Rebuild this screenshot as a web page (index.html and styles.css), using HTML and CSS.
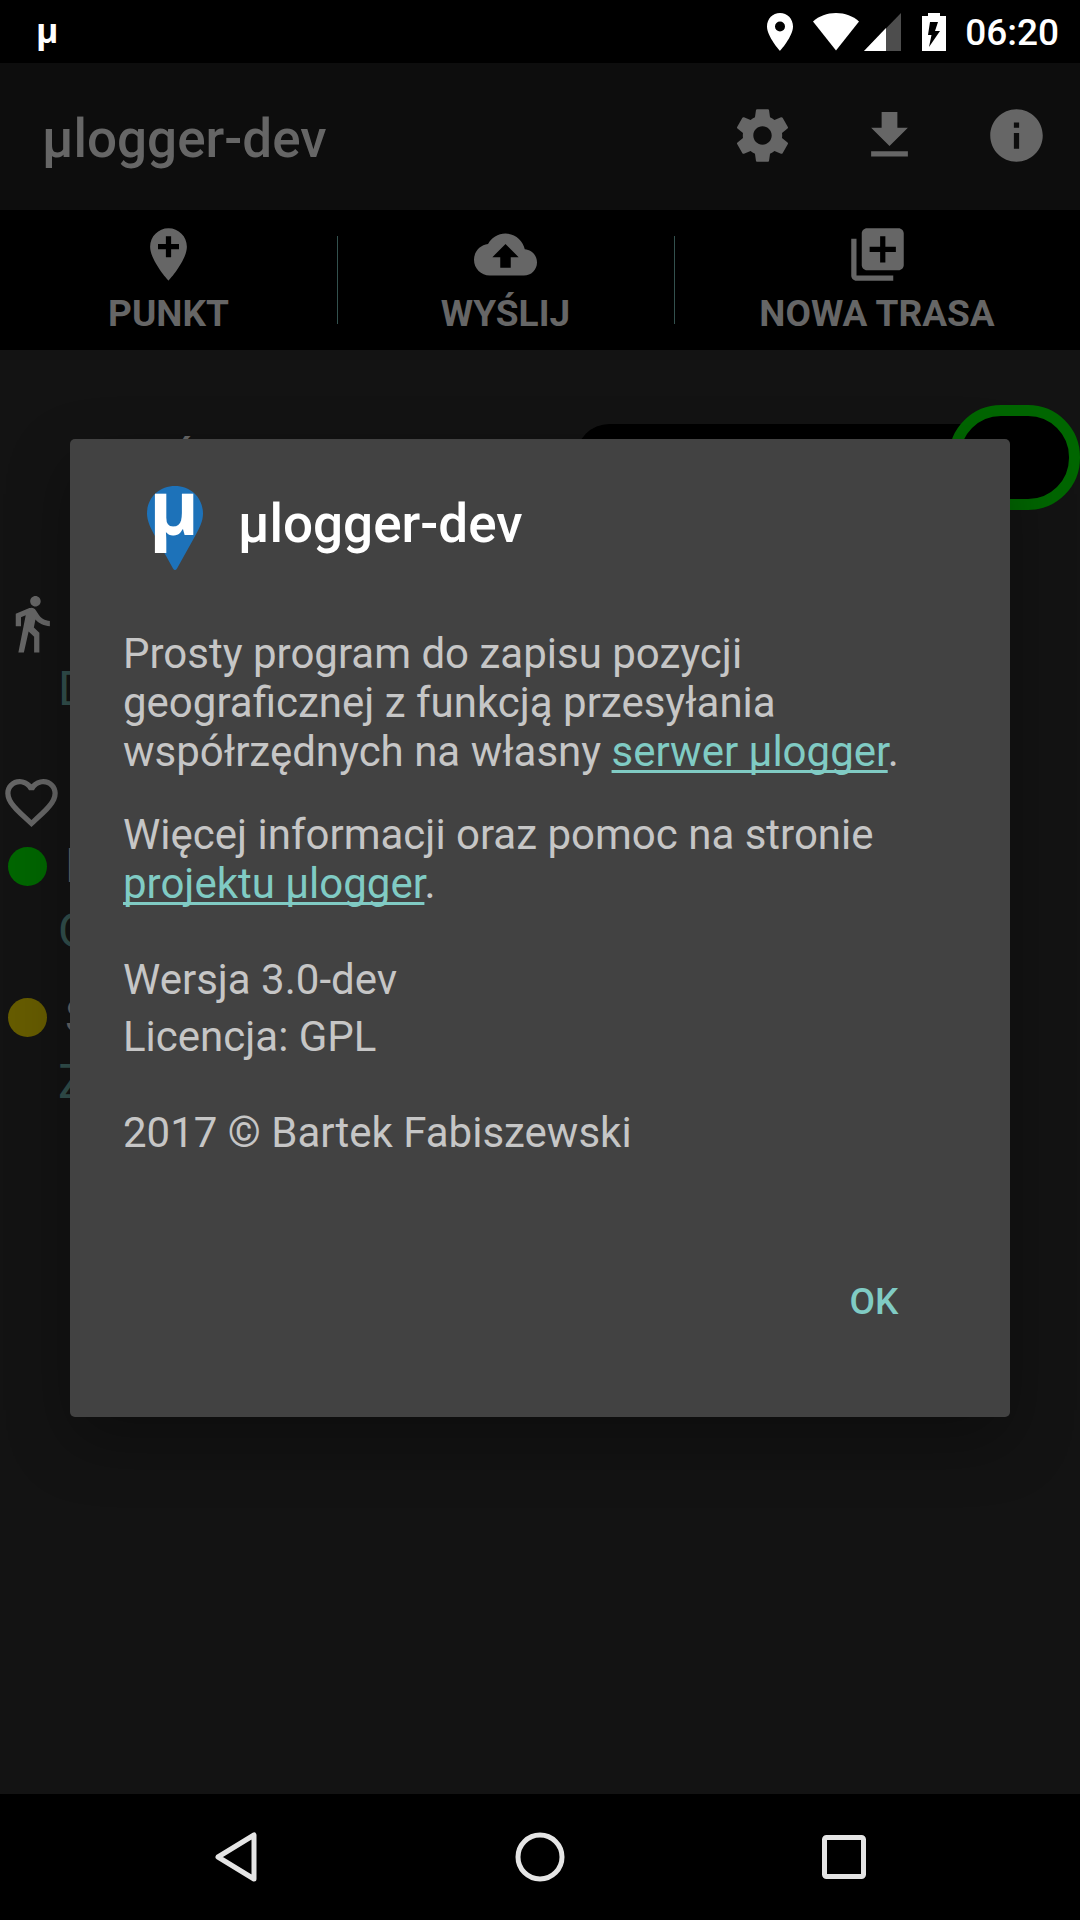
FILE: index.html
```html
<!DOCTYPE html>
<html lang="pl">
<head>
<meta charset="utf-8">
<meta name="viewport" content="width=device-width, initial-scale=1">
<title>μlogger-dev</title>
<link rel="stylesheet" href="styles.css">
</head>
<body>
<div class="screen">
  <header class="status">
    <span class="status-app">µ</span>
    <div class="status-icons">
      <svg class="s-pin" viewBox="0 0 26 38"><path fill="#fff" fill-rule="evenodd" d="M13 0C5.800 0 0 5.800 0 13.500C0 23.500 13 38 13 38S26 23.500 26 13.500C26 5.800 20.200 0 13 0ZM13 8.500a5 5 0 1 1 0 10a5 5 0 0 1 0-10Z"/></svg>
      <svg class="s-wifi" viewBox="0 0 46 38"><path fill="#fff" d="M0 8.500C6 3 14 0 23 0s17 3 23 8.500L23 37.500Z"/></svg>
      <svg class="s-cell" viewBox="0 0 37 38"><path fill="#4d4d4d" d="M37 0V38H0Z"/><path fill="#fff" d="M22 15V38H0Z"/></svg>
      <svg class="s-batt" viewBox="0 0 24 38"><path fill="#fff" d="M6 0H18V3H24V38H0V3H6Z"/><path fill="#000" d="M8 9H16L13 18H18L7 34L9.500 22H6Z"/></svg>
      <time class="clock">06:20</time>
    </div>
  </header>

  <div class="appbar">
    <h1 class="title">µlogger-dev</h1>
    <nav class="actions">
      <button class="icon-btn" aria-label="Ustawienia"><svg class="icon" viewBox="0 0 24 24"><path fill="currentColor" d="M19.430 12.980c.04-.32.07-.64.07-.98s-.03-.66-.07-.98l2.110-1.650c.19-.15.24-.42.12-.64l-2-3.460c-.12-.22-.39-.3-.61-.22l-2.490 1c-.52-.4-1.080-.73-1.690-.98l-.38-2.650C14.460 2.180 14.250 2 14 2h-4c-.25 0-.46.18-.49.42l-.38 2.650c-.61.25-1.170.59-1.690.98l-2.490-1c-.23-.09-.49 0-.61.22l-2 3.460c-.13.22-.07.49.12.64l2.110 1.650c-.04.32-.07.65-.07.98s.03.66.07.98l-2.110 1.650c-.19.15-.24.42-.12.64l2 3.460c.12.22.39.3.61.22l2.490-1c.52.4 1.080.73 1.690.98l.38 2.650c.03.24.24.42.49.42h4c.25 0 .46-.18.49-.42l.38-2.650c.61-.25 1.170-.59 1.690-.98l2.490 1c.23.09.49 0 .61-.22l2-3.460c.12-.22.07-.49-.12-.64l-2.110-1.650zM12 15.500c-1.930 0-3.500-1.570-3.500-3.500s1.570-3.500 3.500-3.500 3.500 1.570 3.500 3.500-1.570 3.500-3.500 3.500z"/></svg></button>
      <button class="icon-btn" aria-label="Eksport"><svg class="icon" viewBox="0 0 24 24"><path fill="currentColor" d="M19 9h-4V3H9v6H5l7 7 7-7zM5 18v2h14v-2H5z"/></svg></button>
      <button class="icon-btn" aria-label="Informacje"><svg class="icon" viewBox="0 0 24 24"><path fill="currentColor" d="M12 2C6.480 2 2 6.480 2 12s4.480 10 10 10 10-4.480 10-10S17.520 2 12 2zm1 15h-2v-6h2v6zm0-8h-2V7h2v2z"/></svg></button>
    </nav>
  </div>

  <div class="tabs">
    <button class="tab"><svg class="tab-icon" viewBox="0 0 24 24"><path fill="currentColor" d="M12 2C8.140 2 5 5.140 5 9c0 5.250 7 13 7 13s7-7.750 7-13c0-3.860-3.140-7-7-7zm4 8h-3v3h-2v-3H8V8h3V5h2v3h3v2z"/></svg><span>PUNKT</span></button>
    <button class="tab"><svg class="tab-icon" viewBox="0 0 24 24"><path fill="currentColor" d="M19.350 10.040C18.670 6.590 15.640 4 12 4 9.110 4 6.600 5.640 5.350 8.040 2.340 8.360 0 10.910 0 14c0 3.310 2.690 6 6 6h13c2.760 0 5-2.240 5-5 0-2.640-2.050-4.780-4.650-4.960zM14 13v4h-4v-4H7l5-5 5 5h-3z"/></svg><span>WYŚLIJ</span></button>
    <button class="tab tab-wide"><svg class="tab-icon" viewBox="0 0 24 24"><path fill="currentColor" d="M4 6H2v14c0 1.100.9 2 2 2h14v-2H4V6zm16-4H8c-1.100 0-2 .9-2 2v12c0 1.100.9 2 2 2h12c1.100 0 2-.9 2-2V4c0-1.100-.9-2-2-2zm-1 9h-4v4h-2v-4H9V9h4V5h2v4h4v2z"/></svg><span>NOWA TRASA</span></button>
  </div>

  <main class="content">
    <div class="track-row">
      <span class="track-label">Ś</span>
      <label class="switch"><input type="checkbox" class="switch-input" checked aria-label="Śledzenie"><span class="thumb"></span></label>
    </div>
    <div class="info-row">
      <svg class="walk" viewBox="0 0 24 24"><path fill="#666" d="M13.500 5.500c1.100 0 2-.9 2-2s-.9-2-2-2-2 .9-2 2 .9 2 2 2zM9.800 8.900L7 23h2.100l1.800-8 2.100 2v6h2v-7.500l-2.100-2 .6-3C14.800 12 16.800 13 19 13v-2c-1.900 0-3.500-1-4.300-2.400l-1-1.600c-.4-.6-1-1-1.700-1-.3 0-.5.1-.8.1L6 8.300V13h2V9.600l1.800-.7"/></svg>
    </div>
    <p class="value">D</p>
    <div class="info-row info-heart">
      <svg class="heart" viewBox="0 0 24 24"><path fill="#666" d="M16.500 3c-1.740 0-3.410.81-4.500 2.090C10.910 3.810 9.240 3 7.500 3 4.420 3 2 5.420 2 8.500c0 3.780 3.400 6.860 8.550 11.540L12 21.350l1.450-1.320C18.600 15.360 22 12.280 22 8.500 22 5.420 19.580 3 16.500 3zm-4.400 15.550l-.1.100-.1-.1C7.140 14.240 4 11.390 4 8.500 4 6.500 5.500 5 7.500 5c1.540 0 3.040.99 3.570 2.360h1.870C13.460 5.990 14.960 5 16.500 5c2 0 3.500 1.500 3.500 3.500 0 2.890-3.140 5.740-7.900 10.050z"/></svg>
    </div>
    <p class="led-row"><span class="led led-green"></span>L</p>
    <p class="value">O</p>
    <p class="led-row led-second"><span class="led led-yellow"></span>S</p>
    <p class="value">Z</p>
  </main>

  <footer class="navbar">
    <button class="nav-btn" aria-label="Wstecz"><svg class="nav-icon" viewBox="0 0 56 56"><path fill="none" stroke="#e5e5e5" stroke-width="5" stroke-linejoin="round" d="M46 6V50L10 28Z"/></svg></button>
    <button class="nav-btn" aria-label="Start"><svg class="nav-icon" viewBox="0 0 56 56"><circle cx="28" cy="28" r="22" fill="none" stroke="#e5e5e5" stroke-width="5"/></svg></button>
    <button class="nav-btn" aria-label="Przegląd"><svg class="nav-icon" viewBox="0 0 56 56"><rect x="8.500" y="8.500" width="39" height="39" rx="2" fill="none" stroke="#e5e5e5" stroke-width="5"/></svg></button>
  </footer>

  <div class="overlay">
    <section class="dialog" role="dialog" aria-modal="true" aria-labelledby="dialog-title">
      <div class="dialog-head">
        <svg class="logo" viewBox="0 0 64 88"><path fill="#1d72b9" d="M32 2C16 2 4 14 4 29.500C4 37 8 45 12 52L30 84.500Q32 87.500 34 84.500L51 54C56 45 60 38 60 29.500C60 14 48 2 32 2Z"/><text class="logo-mu" x="6" y="51">µ</text></svg>
        <h2 class="dialog-title" id="dialog-title">µlogger-dev</h2>
      </div>
      <p class="para">Prosty program do zapisu pozycji geograficznej z funkcją przesyłania współrzędnych na własny <a class="link" href="#serwer">serwer µlogger</a>.</p>
      <p class="para">Więcej informacji oraz pomoc na stronie <a class="link" href="#projekt">projektu µlogger</a>.</p>
      <div class="about">
        <p class="meta">Wersja 3.0-dev</p>
        <p class="meta">Licencja: GPL</p>
        <p class="meta copyright">2017 © Bartek Fabiszewski</p>
      </div>
      <div class="dialog-actions"><button class="ok">OK</button></div>
    </section>
  </div>
</div>
</body>
</html>
```
FILE: styles.css
```css
* { box-sizing: border-box; }
body { margin: 0; background: #000; font-family: Roboto, "Liberation Sans", sans-serif; }
h1, h2, p { margin: 0; font-weight: 400; }
svg { display: block; flex: none; }
button { margin: 0; padding: 0; border: 0; background: none; color: inherit; font: inherit; cursor: pointer; }

.screen { position: relative; min-height: 100vh; display: flex; flex-direction: column; background: #131313; overflow: hidden; }

.status { height: 63px; padding: 0 21px 0 36px; display: flex; align-items: center; justify-content: space-between; background: #000; color: #fff; }
.status-app { padding-bottom: 4px; font: 700 34px/40px "Open Sans", sans-serif; }
.status-icons { display: flex; align-items: center; }
.s-pin { width: 26px; height: 38px; margin-right: 20px; }
.s-wifi { width: 46px; height: 38px; margin-right: 5px; }
.s-cell { width: 37px; height: 38px; margin-right: 21px; }
.s-batt { width: 24px; height: 38px; margin-right: 19px; }
.clock { padding-top: 2px; font-size: 37px; font-weight: 500; line-height: 44px; }

.appbar { height: 147px; padding: 0 0 0 42px; display: flex; align-items: center; justify-content: space-between; background: #0d0d0d; color: #666; }
.title { padding-top: 4px; font-size: 53px; font-weight: 500; line-height: 62px; }
.actions { display: flex; padding-bottom: 2px; }
.icon-btn { width: 127px; height: 126px; display: grid; place-items: center; }
.icon { width: 63px; height: 63px; }

.tabs { height: 140px; display: flex; background: #000; color: #666; }
.tab { flex: 337 1 0; position: relative; padding-top: 13px; display: flex; flex-direction: column; align-items: center; font-size: 37px; font-weight: 700; line-height: 44px; }
.tab-wide { flex-grow: 406; }
.tab + .tab::before { content: ""; position: absolute; left: 0; top: 26px; bottom: 26px; width: 1px; background: #33514e; }
.tab-icon { width: 63px; height: 63px; margin-bottom: 6px; }

.content { flex: 1; padding-top: 55px; color: #666; font-size: 48px; line-height: 56px; }
.track-row { display: flex; justify-content: space-between; align-items: center; height: 105px; }
.track-label { padding-left: 172px; font-size: 37px; font-weight: 700; line-height: 44px; }
.switch { position: relative; width: 504px; height: 67px; border-radius: 34px; background: #000; display: flex; align-items: center; justify-content: flex-end; }
.switch-input { position: absolute; inset: 0; margin: 0; opacity: 0; }
.thumb { flex: none; width: 131px; height: 105px; border: 11px solid #060; border-radius: 52px; background: #000; }
.info-row { height: 65px; margin-top: 82px; }
.walk { width: 63px; height: 63px; }
.value { padding-left: 58px; color: #33514e; line-height: 64px; }
.info-heart { height: 64px; margin-top: 50px; }
.heart { width: 63px; height: 63px; }
.led-row { display: flex; align-items: center; gap: 18px; height: 62px; margin-bottom: 2px; padding-left: 8px; }
.led { width: 39px; height: 39px; border-radius: 50%; }
.led-green { background: #060; }
.led-yellow { background: #665c00; }
.led-second { margin-top: 23px; }

.navbar { height: 126px; padding: 0 84px; display: flex; justify-content: space-between; align-items: center; background: #000; }
.nav-btn { flex: 1; height: 126px; display: grid; place-items: center; }
.nav-icon { width: 56px; height: 56px; }

.overlay { position: absolute; inset: 63px 0 126px; padding: 0 70px 2px; display: flex; align-items: center; justify-content: center; }
.dialog { flex: 1; max-width: 1200px; padding: 45px 88px 67px 53px; border-radius: 5px; background: #424242; color: #c6c6c6; font-size: 42px; line-height: 49px; box-shadow: 0 24px 64px rgba(0, 0, 0, .3); }
.dialog-head { display: flex; align-items: flex-start; gap: 31px; padding-left: 20px; margin-bottom: 57px; }
.logo { width: 64px; height: 88px; }
.logo-mu { font: 700 76px "Open Sans", sans-serif; fill: #fff; }
.dialog-title { padding-top: 9px; color: #fff; font-size: 53px; font-weight: 500; line-height: 62px; }
.para { margin-bottom: 34px; }
.link { color: #80cbc4; text-decoration-thickness: 3px; text-decoration-skip-ink: none; text-underline-offset: 4px; }
.about { padding-top: 9px; }
.meta { line-height: 57px; }
.copyright { margin-top: 39px; }
.dialog-actions { display: flex; justify-content: flex-end; margin-top: 93px; }
.ok { width: 96px; height: 96px; color: #80cbc4; font-size: 37px; font-weight: 500; }
```
